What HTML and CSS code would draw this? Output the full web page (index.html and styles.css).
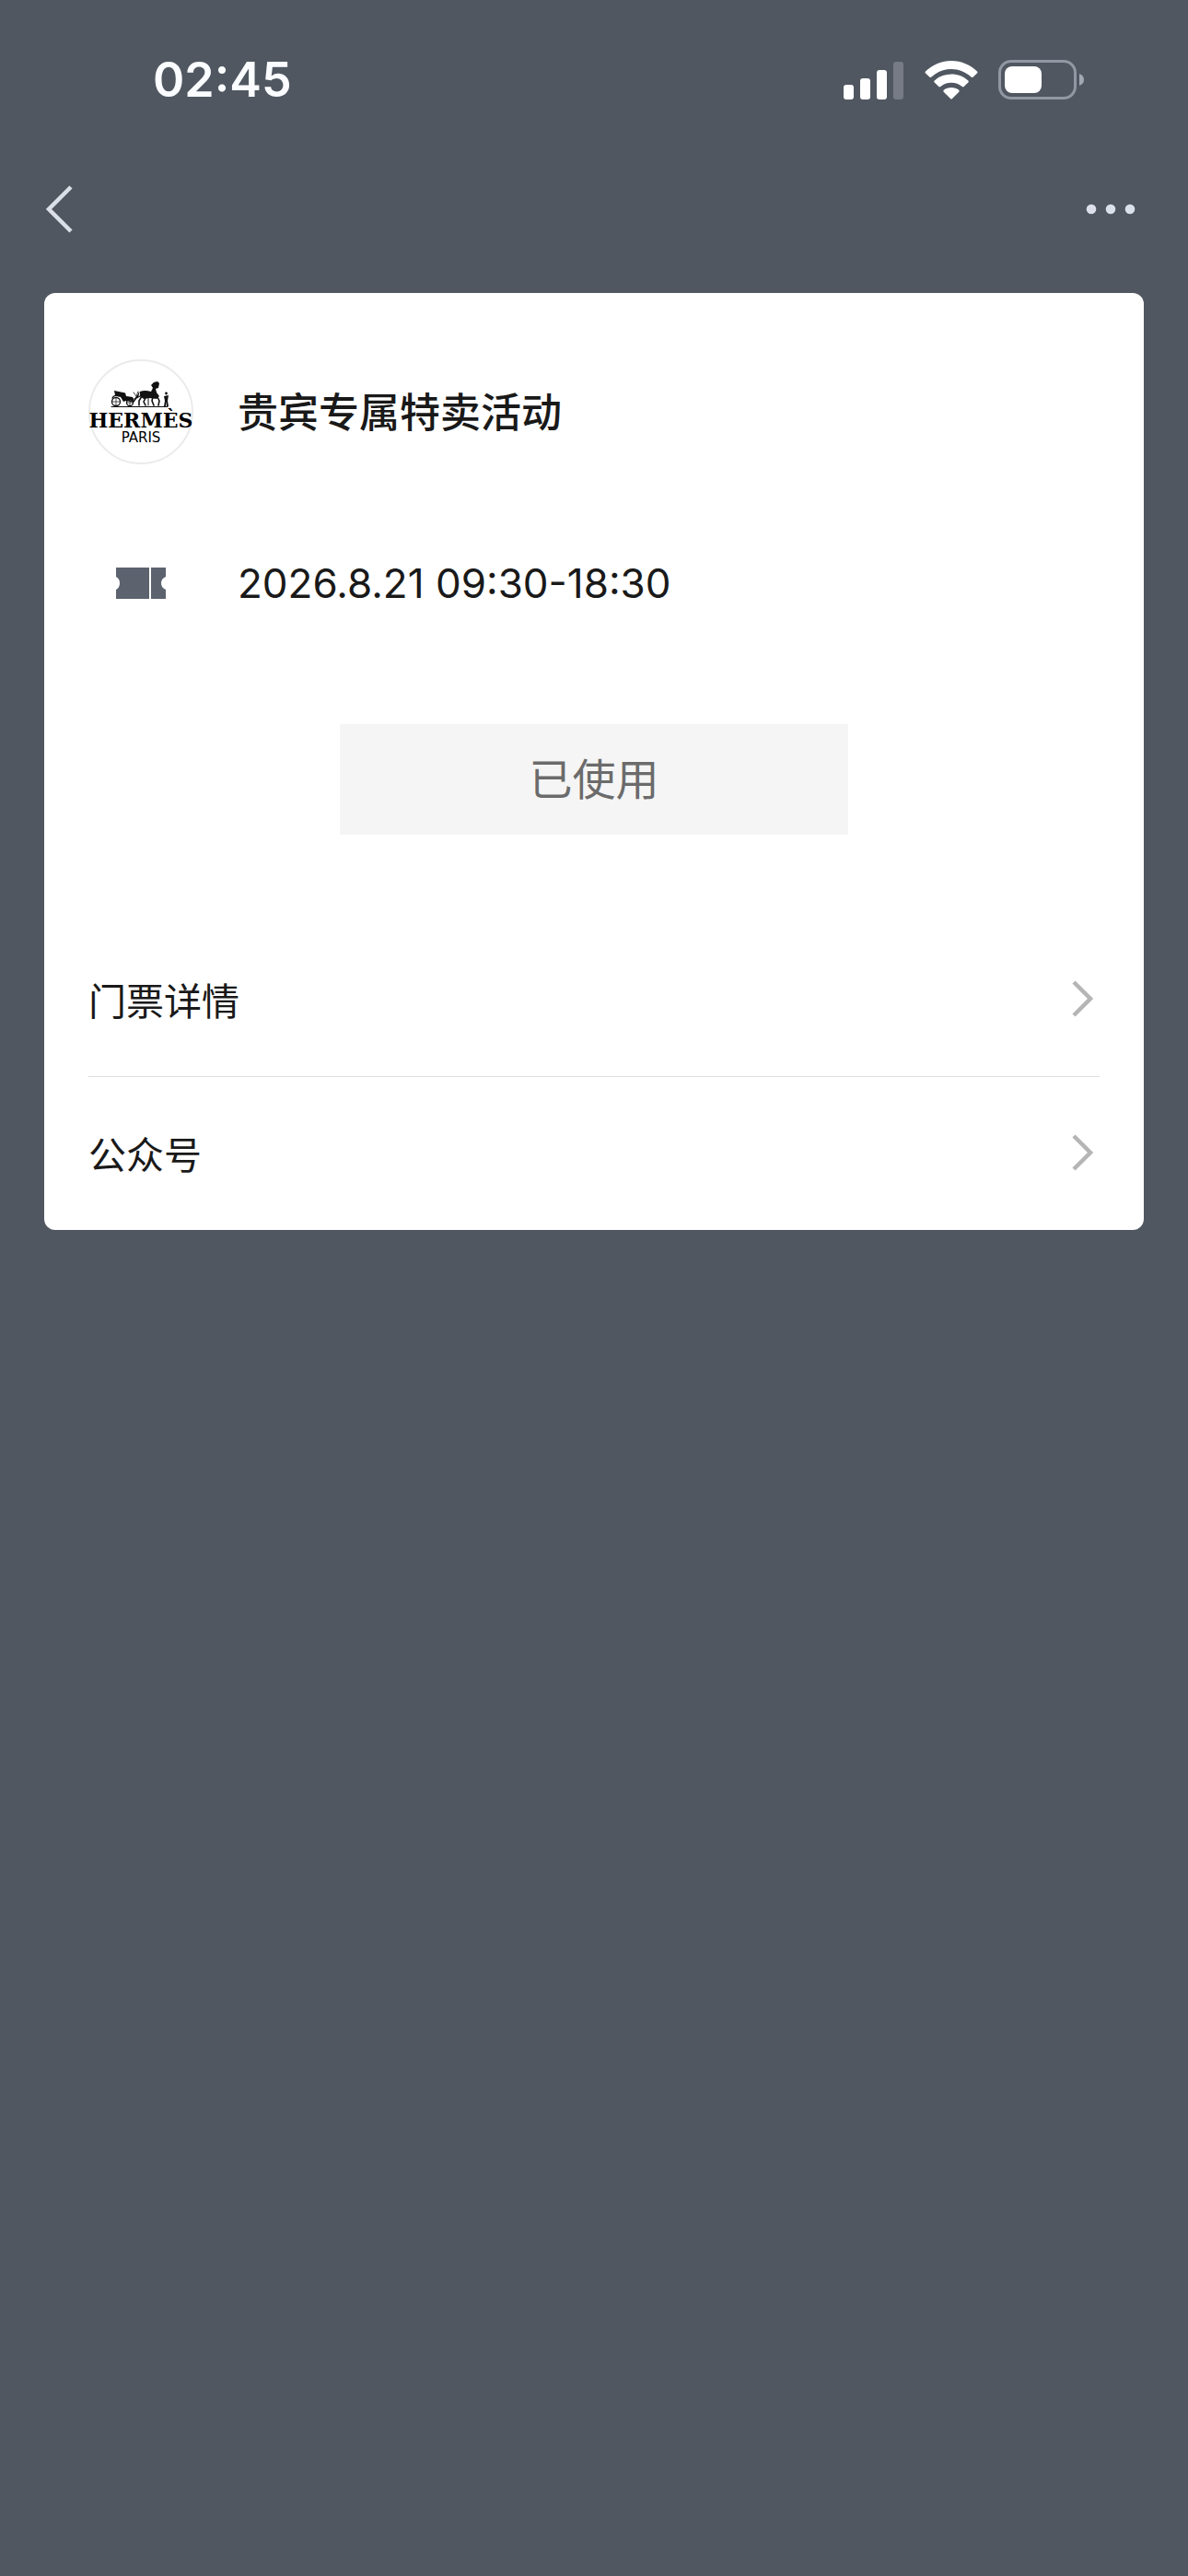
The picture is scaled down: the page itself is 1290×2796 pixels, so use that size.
FILE: index.html
```html
<!DOCTYPE html>
<html lang="zh-CN">
<head>
<meta charset="utf-8">
<meta name="viewport" content="width=device-width, initial-scale=1">
<title>贵宾专属特卖活动</title>
<link rel="stylesheet" href="styles.css">
</head>
<body>
<header class="status-bar">
  <time class="clock">02:45</time>
  <div class="indicators">
    <svg width="66" height="44" viewBox="0 0 66 44" fill="#fff" role="img" aria-label="信号">
      <rect x="0" y="27" width="11" height="16" rx="3"/>
      <rect x="18" y="20" width="11" height="23" rx="3"/>
      <rect x="36" y="11" width="11" height="32" rx="3"/>
      <rect x="54" y="2" width="11" height="41" rx="3" fill="#767b86"/>
    </svg>
    <svg width="58" height="44" viewBox="0 0 58 44" fill="#fff" role="img" aria-label="无线网络">
      <path d="M29 1C18 1 8 5.500 1 12.500Q0 13.500 1 14.500L5.500 18.700Q6.500 19.500 7.500 18.600C13.500 13 21 10 29 10S44.500 13 50.500 18.600Q51.500 19.500 52.500 18.700L57 14.500Q58 13.500 57 12.500C50 5.500 40 1 29 1Z"/>
      <path d="M29 15.500C22 15.500 15.500 18 10.700 22.500Q9.700 23.500 10.700 24.500L15.300 29Q16.200 29.800 17.200 29C20.500 26.200 24.500 24.700 29 24.700S37.500 26.200 40.800 29Q41.800 29.800 42.700 29L47.300 24.500Q48.300 23.500 47.300 22.500C42.500 18 36 15.500 29 15.500Z"/>
      <path d="M29 30C26 30 23 31 20.800 32.800Q19.800 33.700 20.700 34.700L28 42Q29 43 30 42L37.300 34.700Q38.200 33.700 37.200 32.800C35 31 32 30 29 30Z"/>
    </svg>
    <svg width="94" height="44" viewBox="0 0 94 44" role="img" aria-label="电量">
      <rect x="1.500" y="1.500" width="82" height="40" rx="12.500" fill="none" stroke="#9298a3" stroke-width="3"/>
      <rect x="7" y="7" width="40" height="29" rx="8" fill="#fff"/>
      <path d="M88 15Q93 17 93 21.500T88 28Z" fill="#a3a8b1"/>
    </svg>
  </div>
</header>

<nav class="nav-bar">
  <button class="icon-button" type="button" aria-label="返回">
    <svg width="32" height="52" viewBox="0 0 32 52" fill="none" stroke="#dbdfe7" stroke-width="4.500"><path d="M29 2L5 26L29 50"/></svg>
  </button>
  <button class="icon-button" type="button" aria-label="更多">
    <svg width="54" height="12" viewBox="0 0 54 12" fill="#dce0ea"><circle cx="6" cy="6" r="5.300"/><circle cx="27" cy="6" r="5.300"/><circle cx="48" cy="6" r="5.300"/></svg>
  </button>
</nav>

<main class="card">
  <div class="info merchant">
    <svg class="logo" viewBox="0 0 114 114" role="img" aria-label="HERMÈS PARIS">
      <circle cx="57" cy="57" r="56" fill="#fff" stroke="#ebebeb" stroke-width="2"/>
      <g fill="#111" stroke="#111" stroke-linecap="round" stroke-linejoin="round">
        <path stroke-width="1" d="M25 51.500H86"/>
        <g fill="none" stroke-width="1.300">
          <circle cx="30" cy="46" r="4.500"/><circle cx="45" cy="47" r="3.500"/>
          <path d="M30 42V50M26 46H34M45 44V50M42 47H48" stroke-width=".7"/>
          <path d="M26 42Q28 38 33 40M40 44L49 46L54 39M50 43L60 38"/>
          <path d="M49 36L52 40M54 35L51 43" stroke-width=".8"/>
        </g>
        <path stroke="none" d="M28 34L40 36.500L41 40L48 41L50 45L44 44L38 46L35 41L29 39Z"/>
        <path stroke="none" d="M56 35Q61 33 68 35L70 31L68 28L71 25L75 24L77 26L76 31L73 32L74 36L77 40L74 43L66 42L60 43L56 40Z"/>
        <path fill="none" stroke-width="1.600" d="M58 40L55 45V50M62 42L60 46L62 50M70 41L69 45L71 50M75 41L77 45L76 50"/>
        <path fill="none" stroke-width="1" d="M55 36L53 42M65 42V50"/>
        <circle cx="84.500" cy="37" r="1.400" stroke="none"/>
        <path stroke="none" d="M82 40L87 39L86 45L87 51H85L84.500 46L84 51H82L83 45Z"/>
      </g>
      <text class="logo-name" x="57" y="74" text-anchor="middle">HERMÈS</text>
      <text class="logo-city" x="57" y="90" text-anchor="middle">PARIS</text>
    </svg>
    <h1 class="title">贵宾专属特卖活动</h1>
  </div>

  <div class="info schedule">
    <svg class="ticket" width="54" height="34" viewBox="0 0 54 34" fill="#5c636f" aria-hidden="true">
      <path d="M0 0H36V34H0V24Q4 22 4 17T0 10Z"/>
      <path d="M38 0H54V10Q49 12 49 17T54 24V34H38Z"/>
    </svg>
    <time class="date">2026.8.21 09:30-18:30</time>
  </div>

  <button class="used" type="button" disabled>已使用</button>

  <a class="row" href="#details">门票详情
    <svg width="24" height="40" viewBox="0 0 24 40" fill="none" stroke="#b5b5b5" stroke-width="4.500"><path d="M2 2L20 20L2 38"/></svg>
  </a>
  <a class="row" href="#account">公众号
    <svg width="24" height="40" viewBox="0 0 24 40" fill="none" stroke="#b5b5b5" stroke-width="4.500"><path d="M2 2L20 20L2 38"/></svg>
  </a>
</main>
</body>
</html>
```
FILE: styles.css
```css
* {
  box-sizing: border-box;
}

body {
  margin: 0;
  min-height: 100vh;
  background: #505761;
  color: #191919;
  font-family: Inter, "Noto Sans CJK SC", sans-serif;
}

.status-bar {
  display: flex;
  align-items: center;
  justify-content: space-between;
  height: 174px;
  padding: 0 112px 0 166px;
}

.clock {
  color: #fafcff;
  font-size: 52px;
  font-weight: 600;
  line-height: 64px;
}

.indicators {
  display: flex;
  gap: 22px;
}

.nav-bar {
  display: flex;
  align-items: center;
  justify-content: space-between;
  height: 106px;
  padding: 0 57px 0 48px;
}

.icon-button {
  display: flex;
  padding: 0;
  border: 0;
  background: none;
}

.card {
  margin: 38px 48px;
  padding: 72px 48px 0;
  border-radius: 12px;
  background: #fff;
}

.info {
  display: grid;
  grid-template-columns: 114px 1fr;
  align-items: center;
  column-gap: 48px;
}

.logo {
  width: 114px;
  height: 114px;
  overflow: visible;
}

.logo-name {
  font: bold 22px "DejaVu Serif", serif;
}

.logo-city {
  font: 15px "DejaVu Sans", sans-serif;
}

.title {
  margin: 0;
  padding-top: 2px;
  font-size: 44px;
  font-weight: 500;
  line-height: 64px;
}

.schedule {
  margin-top: 97px;
}

.ticket {
  justify-self: center;
}

.date {
  font-size: 44px;
  line-height: 64px;
}

.used {
  display: block;
  width: 552px;
  max-width: 100%;
  height: 120px;
  margin: 121px auto 95px;
  padding: 0 0 8px;
  border: 0;
  background: #f5f5f5;
  color: #6b6b6b;
  font-family: inherit;
  font-size: 47px;
}

.row {
  display: flex;
  align-items: center;
  justify-content: space-between;
  height: 167px;
  padding: 0 6px 2px 0;
  color: inherit;
  font-size: 41px;
  text-decoration: none;
}

.row + .row {
  border-top: 1px solid #dedede;
}
```
